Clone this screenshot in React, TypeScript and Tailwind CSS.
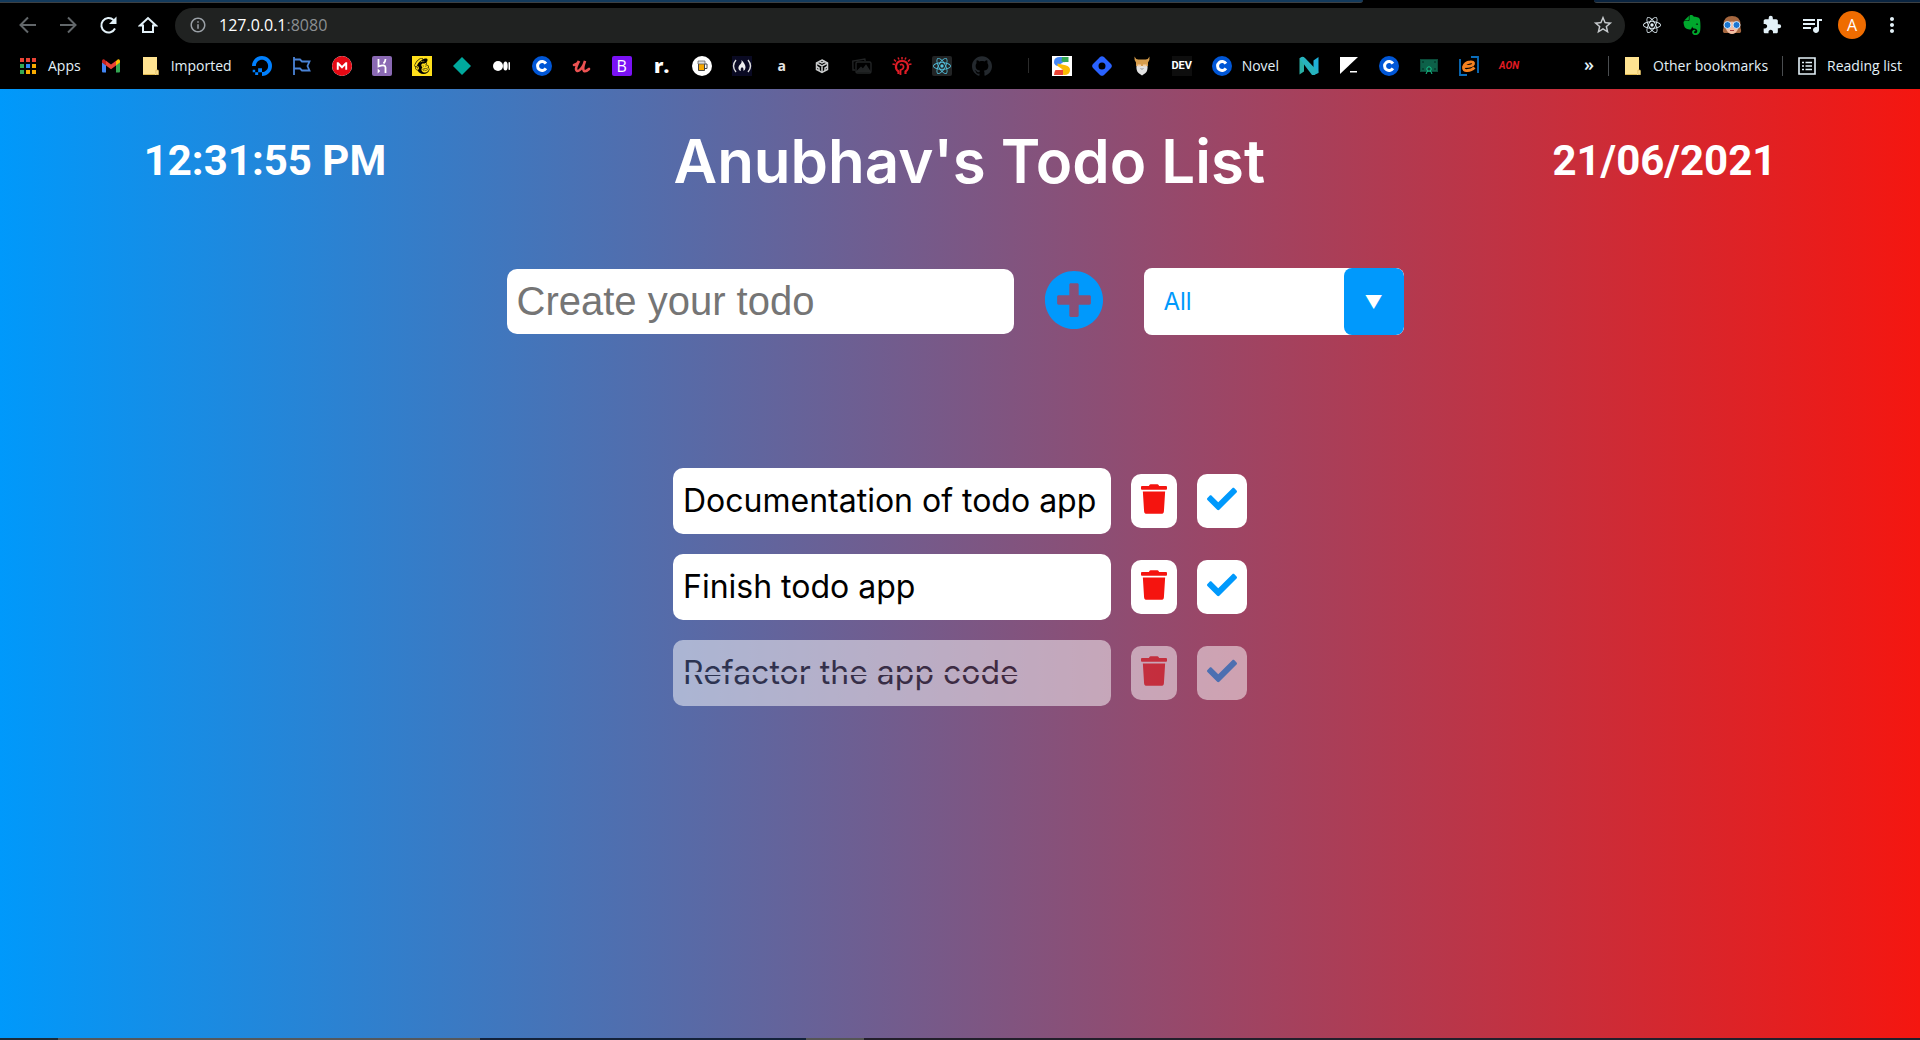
import { useState, type ReactNode } from "react";
import {
  SiDigitalocean,
  SiMailchimp,
  SiReact,
  SiGithub,
  SiEvernote,
  SiMega,
} from "react-icons/si";
import { MdExtension, MdQueueMusic, MdStarBorder, MdInfoOutline, MdMoreVert } from "react-icons/md";
import { FaCheck, FaPlusCircle, FaTrash } from "react-icons/fa";

type Bookmark = { label: string; text?: string; icon: ReactNode };

function AppsIcon() {
  const colors = ["#ea4335", "#ea4335", "#ea4335", "#34a853", "#2f86f6", "#f9ab00", "#34a853", "#f9ab00", "#f9ab00"];
  return (
    <svg viewBox="0 0 20 20" className="size-5">
      {colors.map((c, i) => (
        <rect key={i} x={2 + (i % 3) * 6} y={2 + Math.floor(i / 3) * 6} width="4" height="4" fill={c} />
      ))}
    </svg>
  );
}

function GmailIcon() {
  return (
    <svg viewBox="0 0 20 20" className="size-5">
      <path d="M1 6v9.500q0 1 1 1h3V9z" fill="#4285f4" />
      <path d="M19 6v9.500q0 1-1 1h-3V9z" fill="#34a853" />
      <path d="M1 6.500V5q0-2 2-1.700L5 5v4.500z" fill="#c5221f" />
      <path d="M19 6.500V5q0-2-2-1.700L15 5v4.500z" fill="#fbbc04" />
      <path d="M5 4.800l5 3.800 5-3.800v4.700l-5 3.800-5-3.800z" fill="#ea4335" />
    </svg>
  );
}

function FolderIcon() {
  return (
    <svg viewBox="0 0 20 20" className="size-5">
      <path d="M2 1h14v13l1.500 1v4H2z" fill="#ffe391" />
      <path d="M2 18h12v1H2z" fill="#e0b94f" />
      <path d="M15 14h2.200v4.500H15z" fill="#ffe9a8" stroke="#d9b04a" strokeWidth=".7" />
    </svg>
  );
}

function FlagIcon() {
  return (
    <svg viewBox="0 0 20 20" className="size-5" fill="none" stroke="#4a83d6" strokeWidth="1.800">
      <path d="M2 1v18M2 3.500h6l2 2h7.500l-2 4.500 2 4.500H10l-2-2H2" />
    </svg>
  );
}

function MegaIcon() {
  return <SiMega className="size-5 rounded-full bg-white text-[#e50914]" />;
}

function HerokuIcon() {
  return (
    <svg viewBox="0 0 20 20" className="size-5">
      <rect width="20" height="20" rx="2" fill="#8a69b3" />
      <path d="M6.500 3v7.500q7-2.500 7 1V17M13.500 3q0 2.500-2 4.500" fill="none" stroke="#fff" strokeWidth="1.800" />
      <path d="M5.700 12.500L8.200 15l-2.500 2.500z" fill="#fff" />
    </svg>
  );
}

function MediumIcon() {
  return (
    <svg viewBox="0 0 20 20" className="size-5" fill="#fff">
      <circle cx="6" cy="10" r="5" />
      <ellipse cx="13.500" cy="10" rx="2.200" ry="4.500" />
      <rect x="16.500" y="6" width="1.500" height="8" rx=".7" />
    </svg>
  );
}

function CourseIcon() {
  return (
    <svg viewBox="0 0 20 20" className="size-5">
      <circle cx="10" cy="10" r="10" fill="#0056d6" />
      <path d="M13.900 12.400a4.500 4.500 0 1 1 0-4.800" fill="none" stroke="#fff" strokeWidth="3" />
    </svg>
  );
}

function BeerIcon() {
  return (
    <svg viewBox="0 0 20 20" className="size-5">
      <circle cx="10" cy="10" r="10" fill="#fff" />
      <path d="M6.500 6.500h6v8h-6z" fill="#f7a800" stroke="#444" />
      <path d="M6 5h7v3H6z" fill="#ddd" stroke="#555" strokeWidth=".7" />
      <path d="M13 8h2v4.500h-2" fill="none" stroke="#444" />
    </svg>
  );
}

function CampIcon() {
  return (
    <svg viewBox="0 0 20 20" className="size-5">
      <rect width="20" height="20" fill="#0a0a23" />
      <path d="M4 4q-5 6 0 12M16 4q5 6 0 12" fill="none" stroke="#ddd" strokeWidth="1.400" />
      <path d="M9.500 4q4 4 4 7.500 0 2-2 3.500.5-3-1.500-4-2 1.500-1.200 4-2.800-1-2.300-4Q7 9 9 7.500 10 6 9.500 4z" fill="#eee" />
    </svg>
  );
}

function CubeIcon() {
  return (
    <svg viewBox="0 0 20 20" className="size-5" fill="none" stroke="#c9cbcc" strokeWidth="1.500">
      <path d="M10 4l5.500 3v6.500L10 16.500l-5.500-3V7z" />
      <path d="M4.500 7L10 10l5.500-3M10 10v6.500M7.200 5.500L10 7l2.800-1.500M4.500 10.500L7 12v3M15.500 10.500L13 12v3" />
    </svg>
  );
}

function PicturesIcon() {
  return (
    <svg viewBox="0 0 20 20" className="size-5" fill="none" stroke="#222425" strokeWidth="1.400">
      <path d="M3 14H1L.8 5l12-2 .4 2" />
      <rect x="4" y="6" width="15" height="11" rx="1.500" />
      <path d="M5 15.500l4-4 2 2 3-4 4 6z" fill="#222425" />
    </svg>
  );
}

function SunIcon() {
  return (
    <svg viewBox="0 0 20 20" className="size-5" fill="none" stroke="#dd1c26">
      <path d="M6.500 18v-2.500Q3.500 13.500 4 10q.8-5 6-5t6 5q.5 3.500-2.500 5.500V18" strokeWidth="2.200" />
      <path d="M8.500 19v-5q3.500-1 3-4-1-2.500-3.500-1" strokeWidth="1.800" />
      <path d="M.5 8l2.500.5M2 3.500L4 5.500M6 1.500l1 2M10 1v2.500M14 1.500l-1 2M18 3.500l-2 2M19.500 8l-2.500.5" strokeWidth="1.500" />
    </svg>
  );
}

function SIcon() {
  return (
    <svg viewBox="0 0 20 20" className="size-5">
      <rect width="20" height="20" fill="#fff" />
      <path d="M11 1H8Q2 1 2 6q0 3 3.500 4l6-4z" fill="#4285f4" />
      <path d="M10 1h6.500v5H13q-2 .5-3.500-1z" fill="#34a853" />
      <path d="M5.500 7.500l8 1.700q4.500 1 4.500 4.800 0 5-6 5l-.5-5q-3-2-6-4z" fill="#fbbc04" />
      <path d="M3.500 14h5q2 0 3.500-1l-1 6H2q0-3 1.500-5z" fill="#ea4335" />
      <path d="M11 13h6q-1 5-6 6z" fill="#fbbc04" />
    </svg>
  );
}

function HashIcon() {
  return (
    <svg viewBox="0 0 20 20" className="size-5">
      <path
        fillRule="evenodd"
        d="M1 8l7-7q2-1.700 4 0l7 7q1.700 2 0 4l-7 7q-2 1.700-4 0l-7-7q-1.700-2 0-4zM10 6.500a3.500 3.500 0 1 0 0 7 3.500 3.500 0 1 0 0-7z"
        fill="#2962ff"
      />
    </svg>
  );
}

function VikingIcon() {
  return (
    <svg viewBox="0 0 20 20" className="size-5">
      <path d="M4.500 9q-.5 6 2 8l3.500 2.500 3.500-2.500q2.500-2 2-8z" fill="#e2e2e2" />
      <path d="M2.500.5Q4 4 7 3.500h6q3 .5 4.500-3 .5 4-1.500 6V10H4V6.500Q2 4.500 2.500.5z" fill="#d79d4c" />
      <path d="M5.500 8.500h3.500v2H5.500zM11 8.500h3.500v2H11z" fill="#f3cfa6" />
      <path d="M8.500 12.500q1.500 1.500 3 0" stroke="#999" fill="none" />
    </svg>
  );
}

function NIcon() {
  return (
    <svg viewBox="0 0 20 20" className="size-5">
      <path d="M.5 2.500L5 1v14.500l-4.500 3z" fill="#2ab0a5" />
      <path d="M14.500 4.500l5-3.500v16l-5 2z" fill="#1fb0d8" />
      <path d="M.5 2.500Q3-.5 6 2l13.500 14-4 3H13z" fill="#27b3bd" />
    </svg>
  );
}

function CornerIcon() {
  return (
    <svg viewBox="0 0 20 20" className="size-5" fill="#fff">
      <path d="M1 1h18L1 18z" />
      <path d="M11 15h7v1.500h-7z" />
    </svg>
  );
}

function CertificateIcon() {
  return (
    <svg viewBox="0 0 20 20" className="size-5">
      <rect x="1.500" y="3.500" width="17" height="12" fill="#0d6149" stroke="#0b4a39" />
      <path d="M3 6h2M15 6h2M3 13h2M15 13h2" stroke="#032b20" />
      <circle cx="10" cy="13" r="2.200" fill="#0d4335" stroke="#15c98e" />
      <path d="M8.500 15L7 18M11.500 15l1.500 3" stroke="#15c98e" />
    </svg>
  );
}

function EIcon() {
  return (
    <svg viewBox="0 0 20 20" className="size-5" fill="none">
      <path d="M1 3v16h7M12 1h7v16" stroke="#0a6ebd" strokeWidth="1.800" />
      <path d="M5 10.500q9 0 9.500-2.500Q15 5.500 11 6q-5 .5-6.500 5-.5 4 4 3.500 4 0 7-3" stroke="#f58220" strokeWidth="2.800" />
    </svg>
  );
}

function Lettering({ className, children }: { className: string; children: string }) {
  return <span className={`flex size-5 items-center justify-center leading-none ${className}`}>{children}</span>;
}

const bookmarks: Bookmark[] = [
  { label: "Apps", text: "Apps", icon: <AppsIcon /> },
  { label: "Gmail", icon: <GmailIcon /> },
  { label: "Imported", text: "Imported", icon: <FolderIcon /> },
  { label: "DigitalOcean", icon: <SiDigitalocean className="size-5 text-[#0080ff]" /> },
  { label: "Flag", icon: <FlagIcon /> },
  { label: "Mega", icon: <MegaIcon /> },
  { label: "Heroku", icon: <HerokuIcon /> },
  { label: "Mailchimp", icon: <SiMailchimp className="size-5 bg-[#ffe01b] p-0.5 text-black" /> },
  {
    label: "Diamond",
    icon: (
      <svg viewBox="0 0 20 20" className="size-5">
        <path d="M10 1l9 9-9 9-9-9z" fill="#00a99d" />
      </svg>
    ),
  },
  { label: "Medium", icon: <MediumIcon /> },
  { label: "Courses", icon: <CourseIcon /> },
  {
    label: "Udemy",
    icon: (
      <svg viewBox="0 0 20 20" className="size-5" fill="none" stroke="#ec5252" strokeWidth="2.600" strokeLinecap="round">
        <path d="M2 9q4-1 5-4-3 6-3 8 .5 3 3 1.500Q11 12 13 5q-3 8-1 10 2 .8 5-2" />
      </svg>
    ),
  },
  { label: "Bootstrap", icon: <Lettering className="rounded-xs bg-[#7a12f5] text-base text-white">B</Lettering> },
  { label: "R", icon: <Lettering className="text-xl font-black text-white">r.</Lettering> },
  { label: "Beer", icon: <BeerIcon /> },
  { label: "Camp", icon: <CampIcon /> },
  { label: "A", icon: <Lettering className="text-sm font-bold text-neutral-200">a</Lettering> },
  { label: "Cube", icon: <CubeIcon /> },
  { label: "Pictures", icon: <PicturesIcon /> },
  { label: "Sun", icon: <SunIcon /> },
  { label: "React", icon: <SiReact className="size-5 rounded-xs bg-[#222425] p-px text-[#53c1de]" /> },
  { label: "GitHub", icon: <SiGithub className="size-5 text-[#24292e]" /> },
  {
    label: "Divider",
    icon: (
      <svg viewBox="0 0 20 20" className="size-5">
        <path d="M16.500 2v15" stroke="#2b2b2b" />
      </svg>
    ),
  },
  { label: "S", icon: <SIcon /> },
  { label: "Hash", icon: <HashIcon /> },
  { label: "Viking", icon: <VikingIcon /> },
  {
    label: "DEV",
    icon: <Lettering className="bg-[#0e0e0e] font-['Roboto',sans-serif] text-[11px] font-bold text-white">DEV</Lettering>,
  },
  { label: "Novel", text: "Novel", icon: <CourseIcon /> },
  { label: "N", icon: <NIcon /> },
  { label: "Corner", icon: <CornerIcon /> },
  { label: "More courses", icon: <CourseIcon /> },
  { label: "Certificate", icon: <CertificateIcon /> },
  { label: "E", icon: <EIcon /> },
  {
    label: "AON",
    icon: <Lettering className="font-['Roboto',sans-serif] text-[10px] font-bold text-[#e31b23] italic">AON</Lettering>,
  },
];

function ToolbarButton({ label, children }: { label: string; children: ReactNode }) {
  return (
    <button type="button" aria-label={label} className="flex size-5 shrink-0 items-center justify-center">
      {children}
    </button>
  );
}

function BookmarkLink({ label, text, icon }: Bookmark) {
  return (
    <a href="#" aria-label={label} className="flex shrink-0 items-center gap-2.5">
      {icon}
      {text && <span>{text}</span>}
    </a>
  );
}

function BrowserBar() {
  const stroke = { fill: "none", stroke: "currentColor", strokeWidth: 2 };
  return (
    <header className="bg-black font-['Open_Sans','Noto_Sans',sans-serif] text-[#e3f1f8]">
      <div className="flex h-[3px] justify-between">
        <div className="w-[71%] rounded-br-lg border-b border-[#3c4043] bg-[#133a5c]" />
        <div className="w-[17%] rounded-bl-lg border-b border-[#3c4043] bg-[#0a2440]" />
      </div>
      <div className="flex h-[45px] items-center px-[18px] pb-px">
        <div className="flex gap-5">
          <ToolbarButton label="Back">
            <svg viewBox="0 0 20 20" className="size-5 text-[#62676a]" {...stroke}>
              <path d="M18 10H3M10 2.500L2.500 10l7.500 7.500" />
            </svg>
          </ToolbarButton>
          <ToolbarButton label="Forward">
            <svg viewBox="0 0 20 20" className="size-5 text-[#62676a]" {...stroke}>
              <path d="M2 10h15M10 2.500l7.500 7.500-7.500 7.500" />
            </svg>
          </ToolbarButton>
          <ToolbarButton label="Reload">
            <svg viewBox="0 0 20 20" className="size-5" {...stroke}>
              <path d="M17 13.500A7.200 7.200 0 1 1 15.500 5" />
              <path d="M18.500 1.500V9H11z" fill="currentColor" stroke="none" />
            </svg>
          </ToolbarButton>
          <ToolbarButton label="Home">
            <svg viewBox="0 0 20 20" className="size-5" {...stroke}>
              <path d="M2 10.500L10 3l8 7.500h-3V17H5v-6.500z" />
            </svg>
          </ToolbarButton>
        </div>
        <div className="mr-[17px] ml-[17px] flex h-[35px] flex-1 items-center gap-3 rounded-full bg-[#202221] pr-3 pl-3.5">
          <MdInfoOutline className="size-[18px] text-[#9aa0a6]" />
          <a href="#" className="flex-1 text-base text-white">
            127.0.0.1<span className="text-[#8b8f92]">:8080</span>
          </a>
          <ToolbarButton label="Bookmark this page">
            <MdStarBorder className="size-[22px] shrink-0 text-[#c7cbce]" />
          </ToolbarButton>
        </div>
        <div className="flex items-center gap-5">
          <ToolbarButton label="React tools">
            <SiReact className="size-[18px]" />
          </ToolbarButton>
          <ToolbarButton label="Evernote">
            <SiEvernote className="size-5 text-[#00a82d]" />
          </ToolbarButton>
          <ToolbarButton label="Goggles">
            <svg viewBox="0 0 20 20" className="size-5">
              <path d="M2 18q-2-1-.5-5V9Q2 1 10 1t8.500 8v4q1.500 4-.5 5z" fill="#a5673f" />
              <path d="M4 8q6-3 12 0v6q-2 5-6 5t-6-5z" fill="#f3bfa3" />
              <circle cx="5.500" cy="10" r="3.500" fill="#1976d2" stroke="#cfe6fa" />
              <circle cx="14.500" cy="10" r="3.500" fill="#1976d2" stroke="#cfe6fa" />
              <path d="M8 15.500h4" stroke="#a83c3c" />
            </svg>
          </ToolbarButton>
          <ToolbarButton label="Extensions">
            <MdExtension className="size-5" />
          </ToolbarButton>
          <ToolbarButton label="Media">
            <MdQueueMusic className="size-6 shrink-0" />
          </ToolbarButton>
          <button
            type="button"
            aria-label="Profile"
            className="-mx-1 flex size-7 items-center justify-center rounded-full bg-[#ef6c00] text-base text-white"
          >
            A
          </button>
          <ToolbarButton label="Menu">
            <MdMoreVert className="size-6 shrink-0" />
          </ToolbarButton>
        </div>
      </div>
      <nav aria-label="Bookmarks" className="flex h-[41px] items-center justify-between px-[18px] pb-1.5 text-[14px]">
        <div className="flex items-center gap-5">
          {bookmarks.map((b) => (
            <BookmarkLink key={b.label} {...b} />
          ))}
        </div>
        <div className="flex items-center">
          <button type="button" aria-label="More bookmarks" className="mr-3.5 pb-1 text-lg leading-none font-semibold">
            »
          </button>
          <div className="mr-3.5 h-5 w-px bg-[#4a4d50]" />
          <BookmarkLink label="Other bookmarks" text="Other bookmarks" icon={<FolderIcon />} />
          <div className="mx-3.5 h-5 w-px bg-[#4a4d50]" />
          <BookmarkLink
            label="Reading list"
            text="Reading list"
            icon={
              <svg viewBox="0 0 20 20" className="size-5" fill="none" stroke="currentColor" strokeWidth="1.600">
                <path d="M2 2h16v16H2z" />
                <path d="M5 6.500h2M5 10h2M5 13.500h2M8.500 6.500H15M8.500 10H15M8.500 13.500H15" />
              </svg>
            }
          />
        </div>
      </nav>
    </header>
  );
}

type Todo = { id: number; text: string; done: boolean };

const initialTodos: Todo[] = [
  { id: 1, text: "Documentation of todo app", done: false },
  { id: 2, text: "Finish todo app", done: false },
  { id: 3, text: "Refactor the app code", done: true },
];

function TodoRow({ todo, onDelete, onToggle }: { todo: Todo; onDelete: () => void; onToggle: () => void }) {
  return (
    <li className={`flex items-center gap-5 ${todo.done ? "opacity-50" : ""}`}>
      <span
        className={`flex h-[66px] w-[438px] items-center rounded-[10px] bg-white px-2.5 text-[32px] whitespace-nowrap text-black ${
          todo.done ? "line-through decoration-white decoration-[3px]" : ""
        }`}
      >
        {todo.text}
      </span>
      <button
        type="button"
        aria-label={`Delete ${todo.text}`}
        onClick={onDelete}
        className="flex h-[54px] w-[46px] items-center justify-center rounded-[10px] bg-white pb-1 text-[#f5140f]"
      >
        <FaTrash className="h-[30px] w-[26px]" />
      </button>
      <button
        type="button"
        aria-label={`Complete ${todo.text}`}
        onClick={onToggle}
        className="flex h-[54px] w-[50px] items-center justify-center rounded-[10px] bg-white pb-1 text-[#0099fc]"
      >
        <FaCheck className="size-[30px]" />
      </button>
    </li>
  );
}

export default function App() {
  const [todos, setTodos] = useState(initialTodos);
  const [draft, setDraft] = useState("");
  const [filter, setFilter] = useState("All");

  const shown = todos.filter((t) => filter === "All" || (filter === "Completed") === t.done);

  const add = () => {
    if (!draft.trim()) return;
    setTodos([...todos, { id: Date.now(), text: draft.trim(), done: false }]);
    setDraft("");
  };

  return (
    <div className="flex min-h-screen flex-col font-['Inter',sans-serif]">
      <BrowserBar />
      <main className="flex-1 bg-linear-to-r/srgb from-[#0099fb] to-[#f51610]">
        <div className="flex h-[143px] items-center justify-around text-white">
          <time className="font-['Roboto',sans-serif] text-[42px] font-bold">12:31:55 PM</time>
          <h1 className="text-6xl font-semibold">Anubhav's Todo List</h1>
          <time className="font-['Roboto',sans-serif] text-[42px] font-bold">21/06/2021</time>
        </div>
        <form
          className="mt-9 flex items-center justify-center pr-2.5"
          onSubmit={(e) => {
            e.preventDefault();
            add();
          }}
        >
          <input
            type="text"
            aria-label="Create your todo"
            placeholder="Create your todo"
            value={draft}
            onChange={(e) => setDraft(e.target.value)}
            className="h-[65px] w-[507px] rounded-[10px] bg-white px-2.5 font-['Liberation_Sans',sans-serif] text-[40px] text-black outline-none placeholder:text-[#757575]"
          />
          <button type="submit" aria-label="Add todo" className="mr-10 ml-[30px] pb-1 text-[#0099fc]">
            <FaPlusCircle className="size-[60px]" />
          </button>
          <div className="relative flex h-[67px] w-[260px] overflow-hidden rounded-lg bg-white">
            <select
              aria-label="Filter todos"
              value={filter}
              onChange={(e) => setFilter(e.target.value)}
              className="w-full appearance-none bg-transparent px-5 text-2xl text-[#0099fc] outline-none"
            >
              <option>All</option>
              <option>Completed</option>
              <option>Incomplete</option>
            </select>
            <span className="pointer-events-none absolute inset-y-0 right-0 flex w-[60px] items-center justify-center rounded-lg bg-[#0099fc] pt-0.5 text-lg text-white">
              ▼
            </span>
          </div>
        </form>
        <ul className="mt-[133px] flex flex-col items-center gap-5">
          {shown.map((todo) => (
            <TodoRow
              key={todo.id}
              todo={todo}
              onDelete={() => setTodos(todos.filter((t) => t.id !== todo.id))}
              onToggle={() => setTodos(todos.map((t) => (t.id === todo.id ? { ...t, done: !t.done } : t)))}
            />
          ))}
        </ul>
      </main>
      <footer className="flex h-0.5 bg-[#231f2b]">
        <div className="w-[3%] bg-[#1b2b38]" />
        <div className="w-[22%] bg-[#55585c]" />
        <div className="w-[17%] bg-[#14223a]" />
        <div className="w-[3%] bg-[#555]" />
      </footer>
    </div>
  );
}
